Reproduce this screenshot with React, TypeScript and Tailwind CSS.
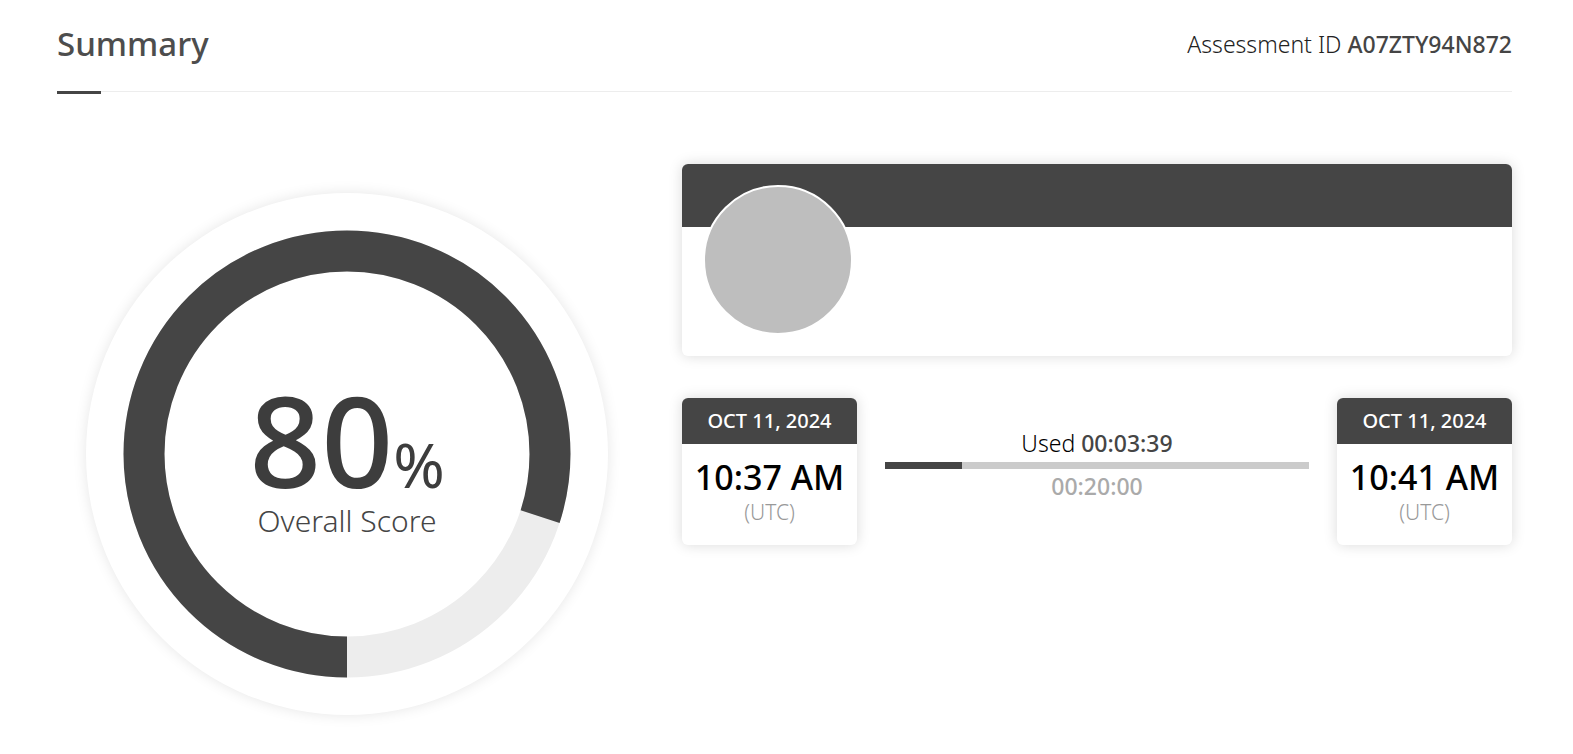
interface Stamp {
  date: string;
  time: string;
  zone: string;
}

const started: Stamp = { date: "OCT 11, 2024", time: "10:37 AM", zone: "(UTC)" };
const finished: Stamp = { date: "OCT 11, 2024", time: "10:41 AM", zone: "(UTC)" };

const score = 80;
const usedSeconds = 3 * 60 + 39;
const allowedSeconds = 20 * 60;

function ScoreRing({ value }: { value: number }) {
  return (
    <div className="relative w-[522px] aspect-square rounded-full bg-white shadow-[0_0_14px_rgba(0,0,0,0.1)]">
      {/* Ring fills clockwise from the bottom */}
      <svg viewBox="0 0 522 522" className="block w-full" aria-hidden="true">
        <g fill="none" strokeWidth="41" transform="rotate(90 261 261)">
          <circle cx="261" cy="261" r="203" stroke="#ededed" />
          <circle
            cx="261"
            cy="261"
            r="203"
            stroke="#454545"
            pathLength="100"
            strokeDasharray={`${value} 100`}
          />
        </g>
      </svg>
      <div className="absolute inset-0 flex flex-col items-center pt-[182px]">
        <p className="flex items-baseline h-[126px] text-[#3d3d3d] leading-[128px]">
          <span className="text-[126px] font-medium">{value}</span>
          <span className="text-[62px]">%</span>
        </p>
        <p className="text-[30px] leading-10 font-light text-[#454545]">Overall Score</p>
      </div>
    </div>
  );
}

function TimeCard({ stamp }: { stamp: Stamp }) {
  return (
    <div className="w-[175px] shrink-0 rounded-md overflow-hidden bg-white text-center shadow-[0_0_14px_rgba(0,0,0,0.15)]">
      <p className="bg-[#454545] text-white text-[20px] leading-[46px] font-medium">{stamp.date}</p>
      <div className="pt-3 pb-[18px]">
        <p className="text-[34px] leading-[42px] font-medium text-black">{stamp.time}</p>
        <p className="text-[21px] leading-[29px] font-light text-[#999999]">{stamp.zone}</p>
      </div>
    </div>
  );
}

export default function App() {
  return (
    <main className="bg-white pl-[57px] pr-[61px] pb-9 font-['Noto_Sans',sans-serif]">
      <header className="relative flex items-center justify-between h-[92px] pb-1 border-b border-[#ededed]">
        <h1 className="text-[33px] leading-[48px] font-medium text-[#4d4d4d]">Summary</h1>
        <p className="text-[23px] leading-8 font-light text-[#222222]">
          Assessment ID <span className="font-medium text-[#454545]">A07ZTY94N872</span>
        </p>
        <span className="absolute left-0 top-[91px] w-11 h-[3px] bg-[#454545]" />
      </header>

      <div className="grid grid-cols-[7fr_10fr] gap-11 pt-[72px]">
        <section className="pl-[29px] pt-[29px]">
          <ScoreRing value={score} />
        </section>

        <section className="flex flex-col gap-[42px]">
          <div className="relative h-48 rounded-md bg-white shadow-[0_0_14px_rgba(0,0,0,0.15)]">
            <div className="h-[63px] rounded-t-md bg-[#454545]" />
            <div className="absolute left-[21px] top-[21px] size-[150px] rounded-full border-2 border-white bg-[#bebebe]" />
          </div>

          <div className="flex items-start gap-7">
            <TimeCard stamp={started} />
            <div className="flex-1 pt-[29px] text-center text-[23px] leading-8">
              <p className="pb-[3px] text-black">
                <span className="font-light">Used</span>{" "}
                <span className="font-medium text-[#454545]">00:03:39</span>
              </p>
              <div className="h-[7px] bg-[#cbcbcb]">
                <div
                  className="h-full bg-[#454545]"
                  style={{ width: `${(usedSeconds / allowedSeconds) * 100}%` }}
                />
              </div>
              <p className="pt-px font-medium text-[#aaaaaa]">00:20:00</p>
            </div>
            <TimeCard stamp={finished} />
          </div>
        </section>
      </div>
    </main>
  );
}
